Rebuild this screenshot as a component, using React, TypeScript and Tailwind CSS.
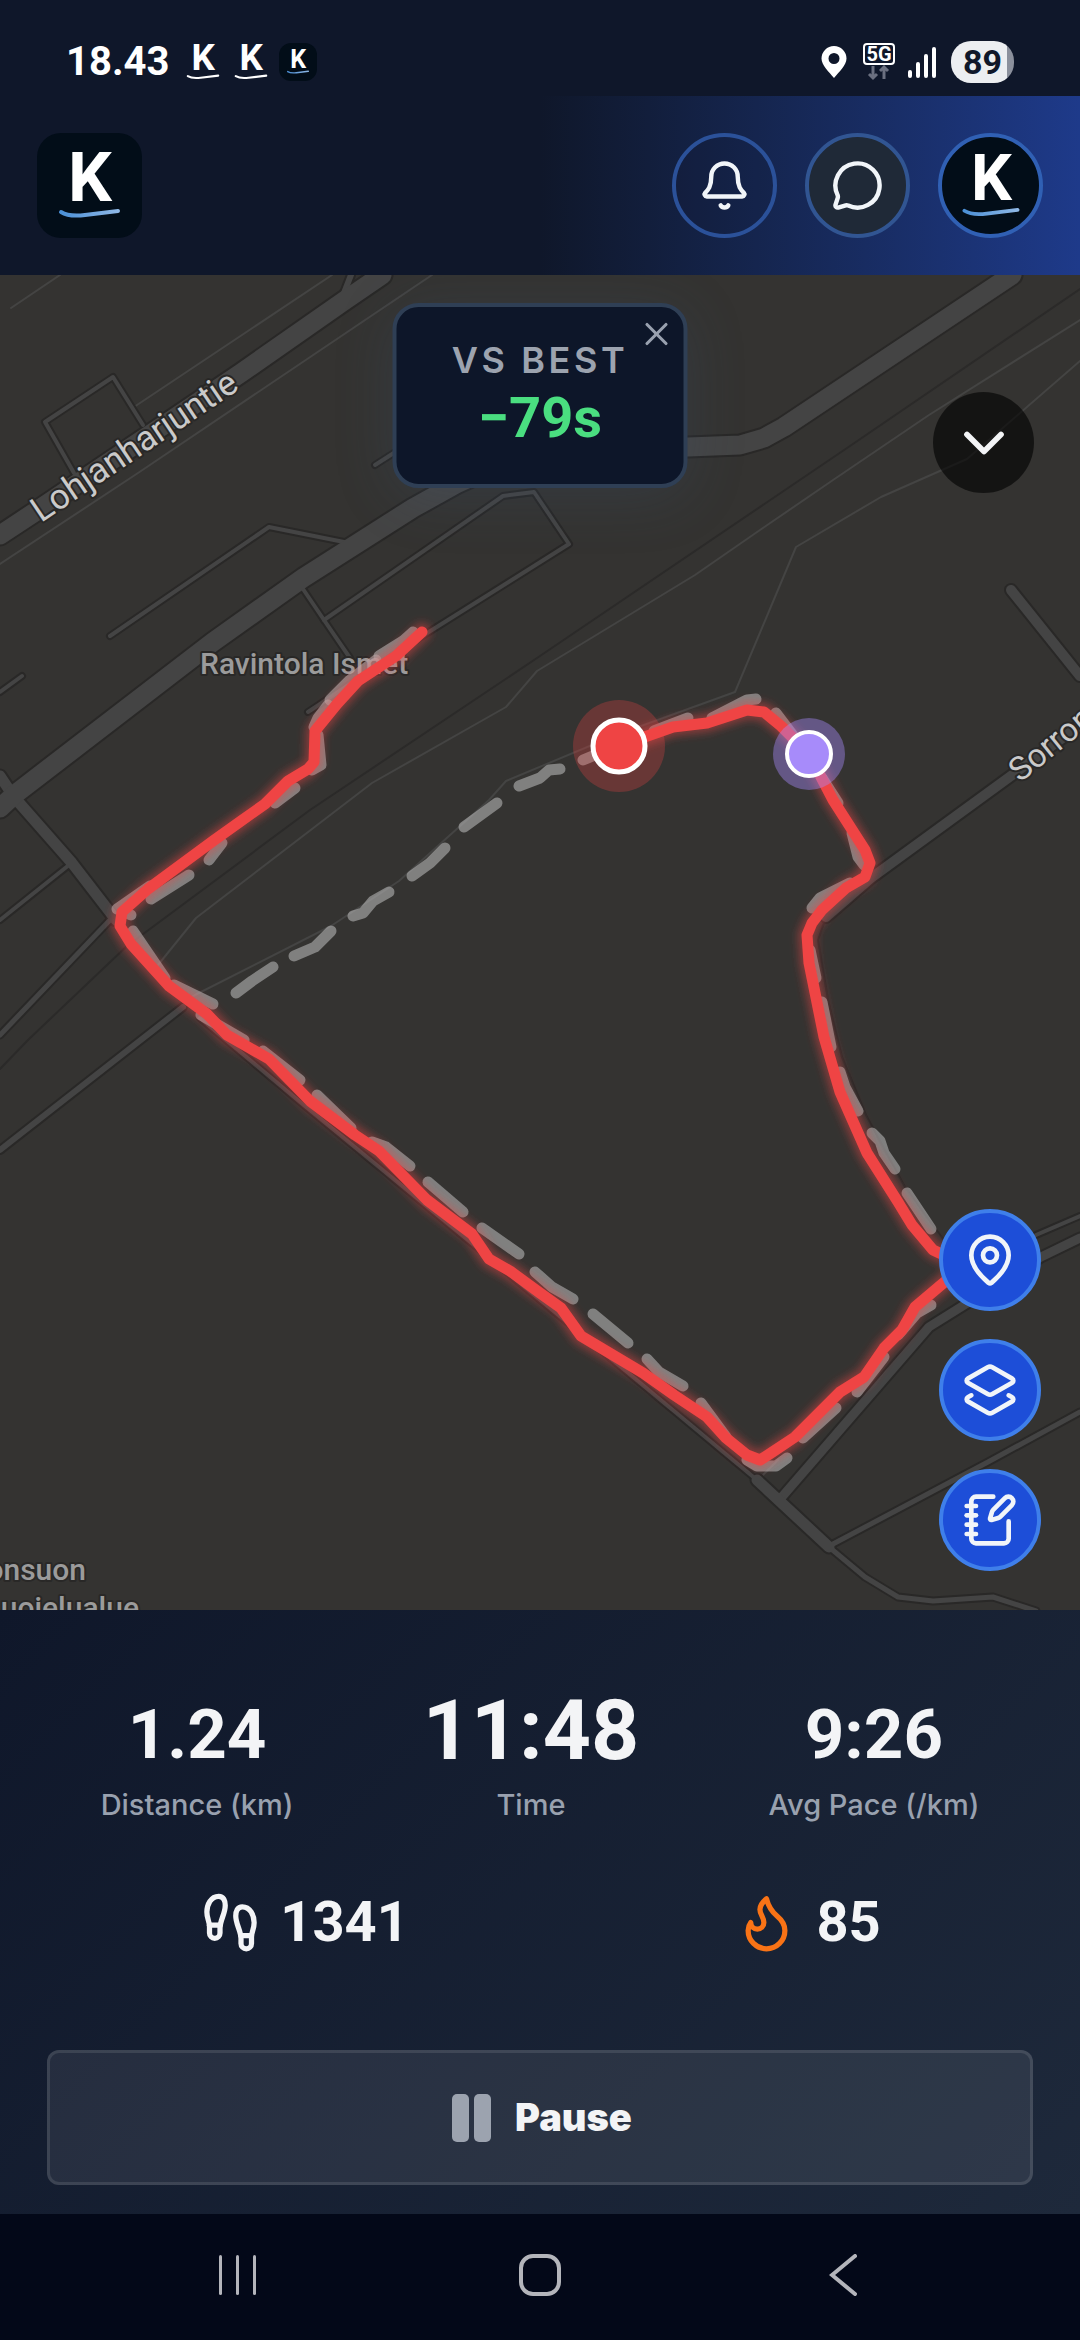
import { Bell, ChevronDown, Flame, Footprints, Layers2, MapPin, MessageCircle, NotebookPen, X } from "lucide-react";

const STATS = [
  { label: "Distance (km)", value: "1.24", size: "text-[69px] leading-[80px]" },
  { label: "Time", value: "11:48", size: "text-[84px] leading-[88px]" },
  { label: "Avg Pace (/km)", value: "9:26", size: "text-[69px] leading-[80px]" },
];

const RAILS = [
  "M1080 289L850 446L540 656L310 810L127 946L28 1040L0 1069",
  "M826 917L818 940L828 1000L842 1057L866 1115L905 1187L960 1262",
];

const PATHS = [
  "M11 308L60 275",
  "M134 407L332 275",
  "M0 564L138 473L432 275",
  "M1080 320L929 415L836 478L760 530L695 575L537 671L506 707L372 783L196 918L158 965",
  "M1080 361L967 459L881 497L796 547L735 692L616 735L506 781L489 800L399 881L331 926L193 996",
  "M760 1478L778 1460",
];

// Widest last so the thin ones tuck in underneath
const ROADS = [
  { width: 4, d: "M74 473L45 422L113 377L143 425" },
  { width: 4, d: "M110 636L269 527L344 542" },
  { width: 4, d: "M0 692L22 676" },
  { width: 4, d: "M303 589L324 620L350 658" },
  { width: 4, d: "M324 620L503 496L534 492L569 544L424 635L308 712" },
  { width: 4, d: "M375 465L400 449" },
  { width: 6, d: "M342 298L351 275" },
  { width: 4, d: "M0 920L69 865" },
  { width: 5, d: "M0 1035L110 920" },
  { width: 6, d: "M0 1150L183 1007" },
  { width: 4, d: "M200 1018L300 1102L480 1250L609 1357L757 1480" },
  { width: 4, d: "M1036 1235L1080 1216" },
  { width: 5, d: "M829 1547L865 1577L898 1597L933 1601L993 1597L1036 1611" },
  { width: 5, d: "M833 1544L988 1462L1080 1412" },
  { width: 10, d: "M1011 590L1080 676" },
  { width: 10, d: "M1080 725L1015 773L871 878L826 917" },
  { width: 9, d: "M1080 1238L1041 1257L929 1327L781 1498" },
  { width: 11, d: "M757 1480L829 1547" },
  { width: 11, d: "M0 776L14 797L72 863L116 920" },
  { width: 19, d: "M0 535L41 508L241 373L344 301L382 275" },
  { width: 19, d: "M0 808L14 795L213 642L303 578L413 508L458 483L520 455L600 449L688 447L740 445L764 438L784 427L1012 275" },
];

const BEST_RUN = [
  "M236 993L252 981L273 967",
  "M294 956L315 947L331 931",
  "M353 916L363 913L373 901L389 892",
  "M412 876L430 863L445 848",
  "M464 827L497 803",
  "M519 786L540 778L549 770L560 769",
  "M583 760L595 755",
  "M413 632L403 641L379 656",
  "M376 660L350 680L330 700",
  "M328 705L318 718L314 727",
  "M318 735L321 765L312 770",
  "M295 788L275 803",
  "M222 843L209 860",
  "M189 875L151 899",
  "M150 886L117 909L131 915",
  "M133 931L165 978",
  "M174 985L213 1004",
  "M201 1015L244 1040",
  "M263 1051L300 1080",
  "M317 1095L351 1128",
  "M372 1142L386 1147L410 1166",
  "M428 1182L463 1212",
  "M482 1228L519 1254",
  "M535 1272L552 1287L573 1299",
  "M593 1314L628 1343",
  "M647 1359L659 1372L683 1386",
  "M701 1403L726 1437",
  "M747 1460L757 1466L776 1466L787 1458",
  "M803 1438L836 1408",
  "M857 1392L884 1357",
  "M898 1335L917 1313L931 1305",
  "M931 1229L907 1193",
  "M895 1169L884 1153L880 1141L872 1133",
  "M858 1111L845 1087L840 1072",
  "M831 1047L822 1002",
  "M816 978L810 950",
  "M812 908L820 898L850 883",
  "M864 865L858 857L852 833",
  "M838 803L822 778",
  "M756 699L747 700L712 718",
  "M688 718L654 731",
  "M776 713L795 738",
];

const ROUTE =
  "M422 632L396 656L358 681L337 704L315 731L314 762L308 769L288 781L265 804L241 821L213 841L148 889L122 912L120 926L131 944L169 986L207 1014L227 1035L269 1059L310 1101L355 1135L379 1151L427 1200L472 1234L489 1259L510 1271L540 1293L561 1308L581 1336L643 1373L674 1395L707 1417L726 1438L747 1455L760 1460L771 1453L795 1437L840 1392L864 1377L884 1348L902 1330L915 1307L941 1285L965 1265L933 1250L912 1225L898 1202L867 1153L840 1092L824 1037L809 963L807 935L812 923L822 910L846 888L865 877L870 863L865 850L833 800L809 754L781 726L764 712L747 710L707 723L673 727L619 746";

function KLogo({ className, line = "url(#k-line)" }: { className: string; line?: string }) {
  return (
    <svg viewBox="0 0 105 105" className={className} role="img" aria-label="K">
      <defs>
        <linearGradient id="k-line" gradientUnits="userSpaceOnUse" x1="23" y1="0" x2="82" y2="0">
          <stop offset="0" stopColor="#4a8fd6" />
          <stop offset="1" stopColor="#8fb8e6" />
        </linearGradient>
      </defs>
      <text x="53" y="68" textAnchor="middle" fill="#fff" fontSize="69" className="font-['Roboto',sans-serif] font-bold">
        K
      </text>
      <path d="M24 79Q32 84 48 82T81 78" fill="none" stroke={line} strokeWidth="4" strokeLinecap="round" />
    </svg>
  );
}

function StatusBar() {
  return (
    <div className="flex h-24 items-center justify-between bg-[#0f172a] px-[66px] pt-7 text-white">
      <div className="flex items-center">
        <span className="text-[40px] leading-none font-bold">18.43</span>
        <KLogo className="ml-1.5 size-14" line="#fff" />
        <KLogo className="-ml-2 size-14" line="#fff" />
        <span className="flex size-[38px] items-center justify-center rounded-xl bg-[#020d18]">
          <KLogo className="size-[38px]" />
        </span>
      </div>
      <div className="flex items-center">
        <svg viewBox="0 0 26 32" className="mr-4 h-8 w-[26px]" aria-hidden="true">
          <path fill="#fff" fillRule="evenodd" d="M13 0a12.500 12.500 0 0 1 12.500 12.500C25.500 19 18 26 13 32C8 26 .5 19 .5 12.500A12.500 12.500 0 0 1 13 0ZM13 7a5.500 5.500 0 1 0 0 11a5.500 5.500 0 0 0 0-11Z" />
        </svg>
        <svg viewBox="0 0 32 38" className="mr-3 h-[38px] w-8" aria-hidden="true">
          <rect x="1" y="1" width="30" height="20" rx="3" fill="none" stroke="#fff" strokeWidth="2" />
          <text x="16" y="18" textAnchor="middle" fill="#fff" fontSize="20" className="font-['Roboto',sans-serif] font-bold">
            5G
          </text>
          <path d="M10 23v12m-4-4l4 4l4-4M21 36V24m-4 4l4-4l4 4" fill="none" stroke="#6b7080" strokeWidth="3" />
        </svg>
        <svg viewBox="0 0 30 32" className="mr-[14px] h-8 w-[30px]" aria-hidden="true">
          <path d="M3 26v4M11 18v12M19 10v20M27 3v27" stroke="#fff" strokeWidth="4" strokeLinecap="round" />
        </svg>
        <span className="flex h-[42px] w-[63px] items-center justify-center rounded-[20px] bg-[linear-gradient(to_right,#eceef1_89%,#8b909c_89%)] text-[34px] leading-none font-bold text-[#0f172a]">
          89
        </span>
      </div>
    </div>
  );
}

function Header() {
  return (
    <header className="flex items-center justify-between bg-linear-to-r from-[#0f172a] from-50% to-[#1e3a8a] px-[37px] py-[37px]">
      <a href="#home" className="overflow-hidden rounded-3xl bg-[#020d18]">
        <KLogo className="size-[105px]" />
      </a>
      <div className="flex items-center gap-7">
        <button type="button" aria-label="Notifications" className="flex size-[105px] items-center justify-center rounded-full border-4 border-[#2b5199] bg-slate-900/10 text-slate-100">
          <Bell className="size-[53px]" />
        </button>
        <button type="button" aria-label="Messages" className="flex size-[105px] items-center justify-center rounded-full border-4 border-[#315592] bg-[#1f2937] text-slate-100">
          <MessageCircle className="size-[53px]" />
        </button>
        <button type="button" aria-label="Profile" className="flex size-[105px] items-center justify-center overflow-hidden rounded-full border-4 border-[#3060b4] bg-[#020d18]">
          <KLogo className="size-[98px] shrink-0" />
        </button>
      </div>
    </header>
  );
}

function MapCanvas() {
  return (
    <svg viewBox="0 275 1080 1335" preserveAspectRatio="xMidYMid slice" className="absolute inset-0 size-full" role="img" aria-label="Route map">
      <defs>
        <filter id="glow" x="-10%" y="-10%" width="120%" height="120%">
          <feGaussianBlur stdDeviation="4" />
        </filter>
      </defs>
      <rect y="275" width="1080" height="1335" fill="#343331" />

      <g fill="none" strokeLinecap="round" strokeLinejoin="round">
        {RAILS.map((d) => (
          <path key={d} d={d} stroke="#2b2a29" strokeWidth="2" />
        ))}
        {PATHS.map((d) => (
          <path key={d} d={d} stroke="#444443" strokeWidth="2" />
        ))}
        {ROADS.map((road) => (
          <path key={road.d} d={road.d} stroke="#292827" strokeWidth={road.width + 4} />
        ))}
        {ROADS.map((road) => (
          <path key={road.d} d={road.d} stroke="#444444" strokeWidth={road.width} />
        ))}
      </g>

      <g stroke="#292827" strokeWidth="4" strokeLinejoin="round" className="font-['Roboto',sans-serif] [paint-order:stroke]">
        <text transform="translate(41 523) rotate(-34)" fill="#cacaca" fontSize="35">Lohjanharjuntie</text>
        <text transform="translate(1020 783) rotate(-39)" fill="#cacaca" fontSize="33">Sorronrinne</text>
        <text x="200" y="674" fill="#9b9b9b" fontSize="30" fontWeight="500">Ravintola Ismet</text>
        <text x="86" y="1580" textAnchor="end" fill="#9b9b9b" fontSize="30" fontWeight="500">onsuon</text>
        <text x="139" y="1618" textAnchor="end" fill="#9b9b9b" fontSize="30" fontWeight="500">uojelualue</text>
      </g>

      <g fill="none" strokeLinecap="round" strokeLinejoin="round">
        {BEST_RUN.map((d) => (
          <path key={d} d={d} stroke="#b4b4b4" strokeOpacity="0.6" strokeWidth="11" />
        ))}
        <path d={ROUTE} stroke="#ef4444" strokeOpacity="0.45" strokeWidth="18" filter="url(#glow)" />
        <path d={ROUTE} stroke="#ef4444" strokeWidth="11" />
      </g>

      <circle cx="619" cy="746" r="46" fill="#ef4444" fillOpacity="0.28" />
      <circle cx="619" cy="746" r="26" fill="#ef4444" stroke="#fff" strokeWidth="5" />
      <circle cx="809" cy="754" r="36" fill="#a78bfa" fillOpacity="0.42" />
      <circle cx="809" cy="754" r="22" fill="#a78bfa" stroke="#fff" strokeWidth="4" />
    </svg>
  );
}

function MapSection() {
  const fab =
    "flex size-[102px] items-center justify-center rounded-full border-4 border-[#3f7fea] bg-[#1d4ed8] text-slate-100";

  return (
    <section className="relative min-h-[900px] flex-1 overflow-hidden">
      <MapCanvas />

      {/* Comparison with the best run */}
      <div className="absolute top-7 left-1/2 flex h-[185px] w-[295px] -translate-x-1/2 flex-col items-center justify-center rounded-[26px] border-4 border-[#2f3f55] bg-[#0d1629] pb-1 shadow-[0_8px_60px_rgba(59,90,130,0.2)]">
        <p className="text-[36px] leading-[44px] font-semibold tracking-widest text-[#9ca3af] font-['Inter',sans-serif]">VS BEST</p>
        <p className="mt-1 text-[56px] leading-[64px] font-bold text-[#4ade80]">−79s</p>
        <button type="button" aria-label="Close" className="absolute top-2 right-2 text-gray-400">
          <X className="size-[38px]" strokeWidth={2} />
        </button>
      </div>

      <button type="button" aria-label="Collapse" className="absolute top-[117px] right-[46px] flex size-[101px] items-center justify-center rounded-full bg-black/60 text-gray-100">
        <ChevronDown className="size-[68px]" />
      </button>

      {/* Map actions */}
      <div className="absolute right-[39px] bottom-[39px] flex flex-col gap-7">
        <button type="button" aria-label="Center on me" className={fab}>
          <MapPin className="size-14" />
        </button>
        <button type="button" aria-label="Map layers" className={fab}>
          <Layers2 className="size-14" />
        </button>
        <button type="button" aria-label="Add note" className={fab}>
          <NotebookPen className="size-14" />
        </button>
      </div>
    </section>
  );
}

function StatsPanel() {
  return (
    <section className="bg-linear-135 from-[#0f172a] to-[#1e293b] pt-[77px] pb-[29px] text-gray-100">
      <div className="flex items-end justify-around px-9">
        {STATS.map((stat) => (
          <div key={stat.label} className="flex flex-col items-center">
            <p className={`${stat.size} font-bold`}>{stat.value}</p>
            <p className="mt-3 text-[29px] leading-9 font-medium text-gray-400 font-['Inter',sans-serif]">{stat.label}</p>
          </div>
        ))}
      </div>
      <div className="mt-[67px] flex justify-around px-9">
        <p className="flex items-center gap-[18px] text-[56px] leading-[64px] font-bold">
          <Footprints className="size-[63px]" />
          1341
        </p>
        <p className="flex items-center gap-[18px] text-[56px] leading-[64px] font-bold">
          <Flame className="size-[63px] text-[#f97316]" />
          85
        </p>
      </div>
      <div className="mt-24 px-[47px]">
        <button type="button" className="flex h-[135px] w-full items-center justify-center gap-6 rounded-xl border-3 border-white/10 bg-white/8 pl-1 text-[38px] font-black font-['Inter',sans-serif]">
          <span className="flex gap-[5px]">
            <span className="h-12 w-[17px] rounded-[5px] bg-[#9ca3af]" />
            <span className="h-12 w-[17px] rounded-[5px] bg-[#9ca3af]" />
          </span>
          Pause
        </button>
      </div>
    </section>
  );
}

function NavBar() {
  return (
    <nav className="grid h-[126px] grid-cols-3 items-center bg-[#030818] px-[86px] pb-1">
      <button type="button" aria-label="Recent apps" className="flex justify-center gap-[14px]">
        <span className="h-10 w-[3px] rounded-full bg-[#b4b5bb]" />
        <span className="h-10 w-[3px] rounded-full bg-[#b4b5bb]" />
        <span className="h-10 w-[3px] rounded-full bg-[#b4b5bb]" />
      </button>
      <button type="button" aria-label="Home" className="flex justify-center">
        <span className="size-[42px] rounded-[14px] border-4 border-[#b4b5bb]" />
      </button>
      <button type="button" aria-label="Back" className="flex justify-center">
        <svg viewBox="0 0 28 42" className="h-[42px] w-7" fill="none" stroke="#b4b5bb" strokeWidth="4">
          <path d="M26 2L3 21L26 40" strokeLinecap="round" />
        </svg>
      </button>
    </nav>
  );
}

export default function App() {
  return (
    <main className="flex min-h-screen flex-col bg-[#0f172a] font-['Roboto',sans-serif]">
      <StatusBar />
      <Header />
      <MapSection />
      <StatsPanel />
      <NavBar />
    </main>
  );
}
